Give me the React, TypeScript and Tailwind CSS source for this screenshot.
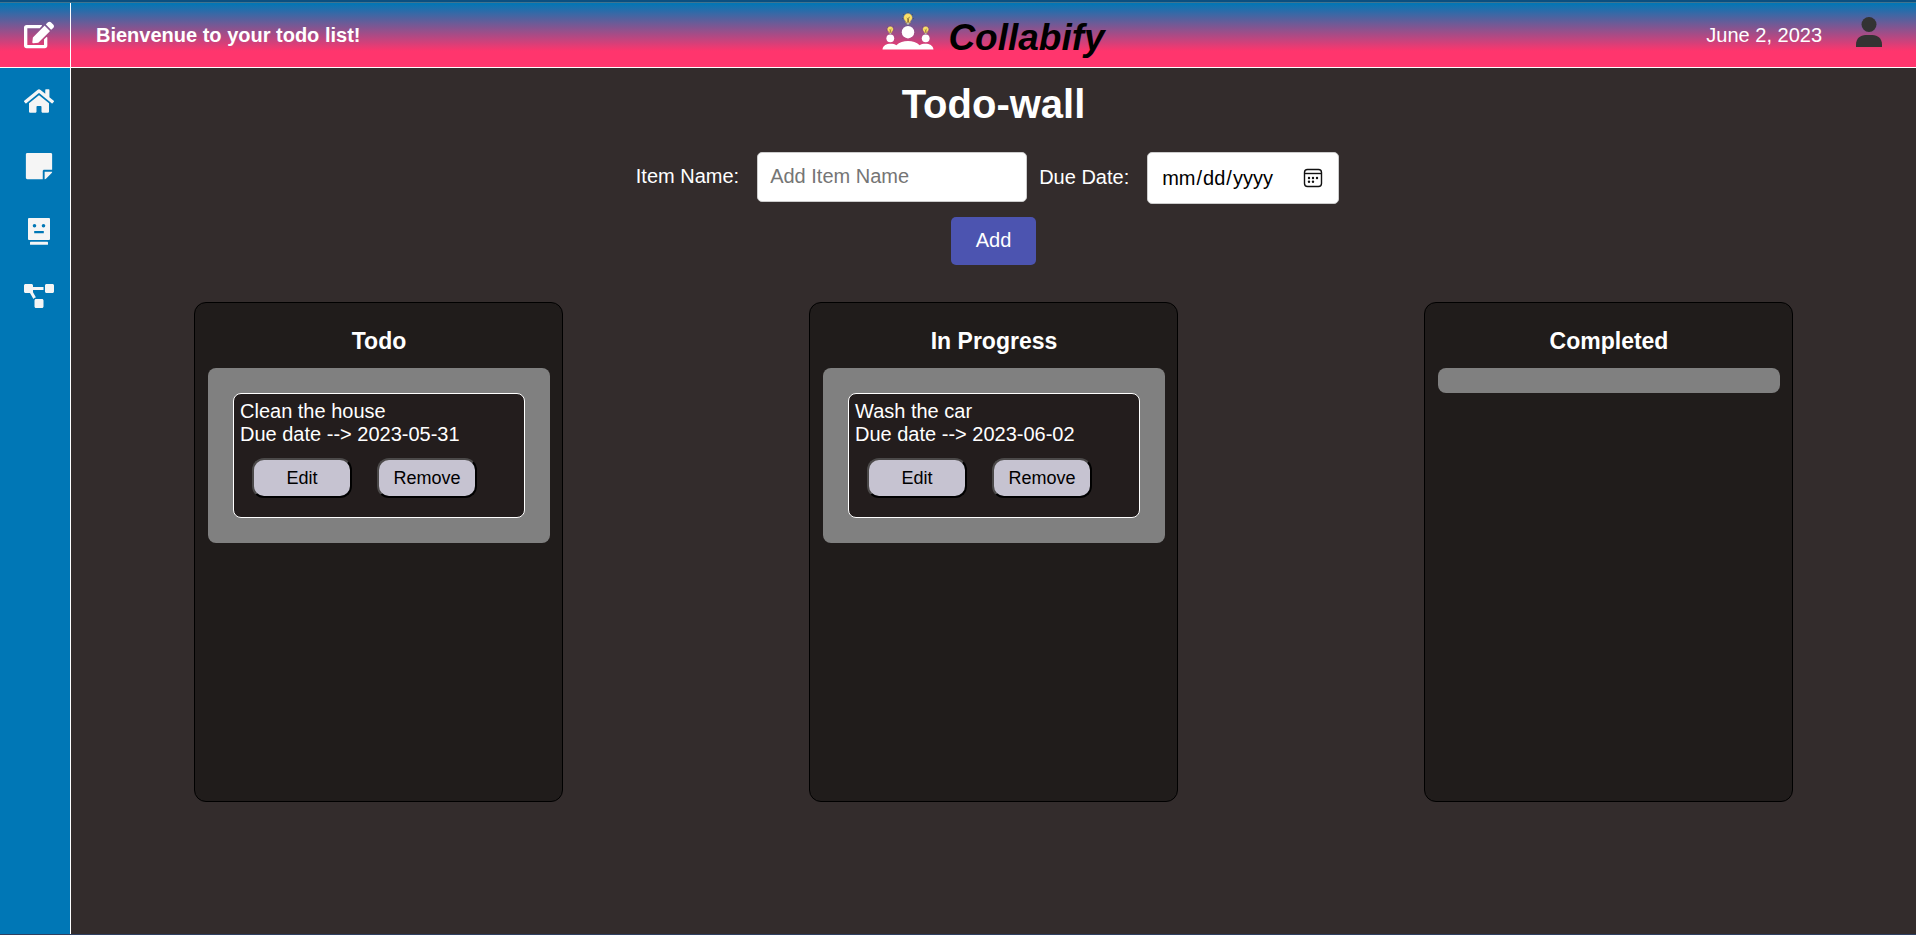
import { FaEdit, FaHome, FaProjectDiagram, FaStickyNote } from "react-icons/fa";

type Task = { name: string; due: string };
type Column = { title: string; tasks: Task[] };

const columns: Column[] = [
  { title: "Todo", tasks: [{ name: "Clean the house", due: "2023-05-31" }] },
  { title: "In Progress", tasks: [{ name: "Wash the car", due: "2023-06-02" }] },
  { title: "Completed", tasks: [] },
];

function Bulb({ x, y, s }: { x: number; y: number; s: number }) {
  return (
    <g transform={`translate(${x} ${y}) scale(${s})`}>
      <path d="M-4.800 -3.800L-3.900 -3M4.800 -3.800L3.900 -3M-5.700 0.600H-4.700M5.700 0.600H4.700M0 -5.800V-5" stroke="#4a4440" strokeWidth="0.8" />
      <path d="M0 -4.400C2.400 -4.400 4.200 -2.700 4.200 -.4C4.200 1.400 3.200 2.400 2.300 3.300V4.800H-2.300V3.300C-3.200 2.400 -4.200 1.400 -4.200 -.4C-4.200 -2.700 -2.400 -4.400 0 -4.400z" fill="#fbe06a" stroke="#c49a48" strokeWidth="0.4" />
      <path d="M-1.2 -.2L-.3 .8V4M1.4 -1.2L.5 .8V4" stroke="#6b5426" strokeWidth="0.7" fill="none" />
      <path d="M-1.8 5.100h3.600l-.7 1.700h-2.200z" fill="#e8e4e0" stroke="#4a4440" strokeWidth="0.4" />
    </g>
  );
}

function TeamLogo() {
  return (
    <svg className="h-[50px] w-[52px]" viewBox="0 0 52 50" aria-hidden="true">
      <Bulb x={26} y={8} s={1} />
      <Bulb x={8.3} y={19.5} s={0.68} />
      <Bulb x={43.7} y={19.5} s={0.68} />
      <g fill="#fff">
        <circle cx="26" cy="22.200" r="6.200" />
        <circle cx="8.3" cy="28.3" r="3.9" />
        <circle cx="43.7" cy="28.3" r="3.9" />
        <path d="M.5 39.5C1 35.5 4.500 33.800 8.500 33.800c2.500 0 4.300.5 5.800 1.400C17.500 32.200 21.500 31 26 31s8.500 1.200 11.700 4.200c1.500-.9 3.300-1.400 5.800-1.400 4 0 7.500 1.700 8 5.700z" />
      </g>
    </svg>
  );
}

function PersonIcon() {
  return (
    <svg className="h-[30px] w-[26px]" viewBox="0 0 26 30" fill="#333" aria-hidden="true">
      <circle cx="13" cy="7.500" r="7.500" />
      <path d="M0 30v-2.500C0 21.500 4.500 18 9.500 18h7C21.500 18 26 21.500 26 27.500V30z" />
    </svg>
  );
}

function FaceIcon() {
  return (
    <svg className="size-[30px]" viewBox="0 0 30 30" fill="currentColor" aria-hidden="true">
      <path
        fillRule="evenodd"
        d="M5 2h20a1 1 0 0 1 1 1v20a1 1 0 0 1-1 1H5a1 1 0 0 1-1-1V3a1 1 0 0 1 1-1zM10.500 7.900a1.800 1.800 0 1 0 0 3.600 1.800 1.800 0 0 0 0-3.600zM19.500 7.900a1.800 1.800 0 1 0 0 3.600 1.800 1.800 0 0 0 0-3.600zM10.200 15v2.300h9.600v-2.300z"
      />
      <rect x="6" y="25.800" width="18" height="3" rx=".6" />
    </svg>
  );
}

function CalendarIcon() {
  return (
    <svg
      className="pointer-events-none absolute top-4 right-4 size-5"
      viewBox="0 0 20 20"
      fill="none"
      stroke="#111"
      strokeWidth="1.400"
      aria-hidden="true"
    >
      <rect x="1.500" y="1.500" width="17" height="17" rx="3" />
      <path d="M2 5.500h16" />
      <g fill="#111" stroke="none">
        <circle cx="6" cy="10" r="1.200" />
        <circle cx="10" cy="10" r="1.200" />
        <circle cx="14" cy="10" r="1.200" />
        <circle cx="6" cy="13.800" r="1.200" />
        <circle cx="10" cy="13.800" r="1.200" />
      </g>
    </svg>
  );
}

function TaskCard({ task }: { task: Task }) {
  const button =
    "h-10 w-[100px] rounded-xl border-2 border-t-[#4b4949] border-r-black border-b-black border-l-[#4b4949] bg-[#c6c3d1] text-lg leading-5 text-black";
  return (
    <li className="h-[125px] rounded-lg border border-white bg-[#231d1d] px-1.5 pt-1.5">
      <p>{task.name}</p>
      <p>Due date --&gt; {task.due}</p>
      <div className="mt-3 flex gap-[25px] pl-3">
        <button type="button" className={button}>Edit</button>
        <button type="button" className={button}>Remove</button>
      </div>
    </li>
  );
}

export default function App() {
  return (
    <div className="flex min-h-screen flex-col border-t-2 border-b border-t-[#0b4f80] border-b-[#2f3f60] bg-[#332c2c] font-['Liberation_Sans',Arial,sans-serif] text-xl leading-[23px] text-white">
      <header className="flex h-[66px] border-t border-b border-t-[#41748f] border-b-white bg-linear-to-b/srgb from-[#0077b6] to-[#ff356d] to-75%">
        <a href="#edit" aria-label="Edit" className="flex w-[71px] items-center justify-end border-r border-white pr-4">
          <FaEdit size={30} />
        </a>
        <div className="grid flex-1 grid-cols-[1fr_auto_1fr] items-center">
          <p className="pl-[25px] font-bold">Bienvenue to your todo list!</p>
          <div className="flex items-center gap-3.5">
            <TeamLogo />
            <span className="pt-1.5 text-[37px] leading-10 font-bold text-black italic">Collabify</span>
          </div>
          <div className="flex items-center justify-end gap-[34px] pr-[34px]">
            <time dateTime="2023-06-02">June 2, 2023</time>
            <a href="#profile" aria-label="Profile" className="pb-1.5">
              <PersonIcon />
            </a>
          </div>
        </div>
      </header>

      <div className="flex flex-1">
        <nav className="w-[71px] border-r border-white bg-[#0077b6] pt-[18px] pr-4 text-[#f5f5f5]">
          <ul className="flex flex-col items-end gap-[35px]">
            <li><a href="#home" aria-label="Home"><FaHome size={30} /></a></li>
            <li><a href="#notes" aria-label="Notes"><FaStickyNote size={30} /></a></li>
            <li><a href="#faces" aria-label="Assistant"><FaceIcon /></a></li>
            <li><a href="#projects" aria-label="Projects"><FaProjectDiagram size={30} /></a></li>
          </ul>
        </nav>

        <main className="flex-1">
          <h1 className="pt-[13px] text-center text-[40px] leading-[46px] font-bold">Todo-wall</h1>

          <form className="mt-[25px] flex flex-col items-center gap-[13px]">
            <div className="flex items-start pr-3">
              <label htmlFor="item-name" className="pt-[13px] pr-[18px]">Item Name:</label>
              <input
                id="item-name"
                type="text"
                placeholder="Add Item Name"
                className="h-[50px] w-[270px] rounded-[5px] border border-[#ccc] bg-white px-3 pb-0.5 text-black placeholder:text-[#757575]"
              />
              <label htmlFor="due-date" className="pt-3.5 pr-[18px] pl-3">Due Date:</label>
              <div className="relative">
                <input
                  id="due-date"
                  type="date"
                  className="h-[52px] w-[192px] rounded-[5px] border border-[#ccc] bg-white px-[13px] text-black [&::-webkit-calendar-picker-indicator]:opacity-0"
                />
                <CalendarIcon />
              </div>
            </div>
            <button type="submit" className="h-12 w-[85px] rounded-[5px] bg-[#4c54b0] pb-0.5">Add</button>
          </form>

          <div className="mt-[37px] grid grid-cols-3 justify-items-center">
            {columns.map((column) => (
              <section key={column.title} className="h-[500px] w-3/5 rounded-xl border border-black bg-[#201c1b] pt-[25px] pr-3 pl-[13px]">
                <h2 className="text-center text-[23px] leading-[27px] font-bold">{column.title}</h2>
                <ul className="mt-[13px] rounded-lg bg-[#808080] p-[25px] empty:h-[25px] empty:p-0">
                  {column.tasks.map((task) => (
                    <TaskCard key={task.name} task={task} />
                  ))}
                </ul>
              </section>
            ))}
          </div>
        </main>
      </div>
    </div>
  );
}
